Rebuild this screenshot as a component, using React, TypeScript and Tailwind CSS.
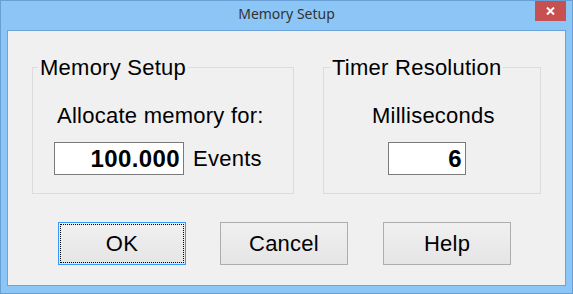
import React from 'react';

function CloseIcon() {
  return (
    <svg width="9" height="8" viewBox="0 0 9 8" className="block">
      <path d="M1 0.5 L8 7.5 M8 0.5 L1 7.5" stroke="#ffffff" strokeWidth="2" fill="none" />
    </svg>
  );
}

interface GroupProps {
  title: string;
  legendOffset: string;
  width: string;
  children: React.ReactNode;
}

function GroupBox({ title, legendOffset, width, children }: GroupProps) {
  return (
    <fieldset className={`${width} h-[139px] border border-[#dcdcdc] min-w-0`}>
      <legend className={`${legendOffset} px-[2px] text-[22px] leading-[25px] tracking-[0.25px] text-black`}>{title}</legend>
      {children}
    </fieldset>
  );
}

function NumberBox({ value, width }: { value: string; width: string }) {
  return (
    <div className={`${width} h-[33px] border border-[#7a7a7a] bg-white pr-[3px] text-right text-[24px] font-bold leading-[31px] tracking-[0.4px] text-black`}>
      {value}
    </div>
  );
}

function DialogButton({ label, focused }: { label: string; focused?: boolean }) {
  return (
    <button
      className={`flex w-[128px] h-[43px] p-[1px] border bg-linear-to-b from-[#f0f0f0] to-[#e5e5e5] text-[22px] tracking-[0.25px] text-black ${
        focused ? 'border-[#3399ff]' : 'border-[#adadad]'
      }`}
    >
      <span
        className={`flex flex-1 items-center justify-center border ${
          focused ? 'border-dotted border-black' : 'border-transparent'
        }`}
      >
        {label}
      </span>
    </button>
  );
}

export default function App() {
  return (
    <div className="w-[573px] h-[294px] flex flex-col border border-[#6a9fd6] bg-[#8bc6f7] font-['Liberation_Sans',Arial,sans-serif]">
      {/* title bar */}
      <div className="h-[29px] grid grid-cols-[1fr_auto_1fr] shrink-0">
        <div />
        <div className="pt-[3px] font-['Noto_Sans',sans-serif] text-[14px] leading-[20px] text-[#333333]">
          Memory Setup
        </div>
        <div className="flex justify-end items-start">
          <div className="mr-[6px] w-[31px] h-[20px] bg-[#c75050] flex items-center justify-center">
            <CloseIcon />
          </div>
        </div>
      </div>

      {/* client area */}
      <div className="mx-[6px] h-[256px] shrink-0 border border-[#6ea3d9] bg-[#f0f0f0] flex flex-col">
        <div className="mt-[24px] flex px-[24px] gap-[29px]">
          <GroupBox title="Memory Setup" legendOffset="ml-[5px]" width="w-[262px]">
            <div className="flex flex-col items-start">
              <div className="mt-[23px] ml-[24px] text-[22px] leading-[25px] tracking-[0.25px] text-black">Allocate memory for:</div>
              <div className="mt-[14px] ml-[21px] flex items-center">
                <NumberBox value="100.000" width="w-[130px]" />
                <span className="ml-[9px] text-[22px] leading-[25px] tracking-[0.25px] text-black">Events</span>
              </div>
            </div>
          </GroupBox>
          <GroupBox title="Timer Resolution" legendOffset="ml-[6px]" width="w-[218px]">
            <div className="flex flex-col items-start">
              <div className="mt-[23px] ml-[48px] text-[22px] leading-[25px] tracking-[0.25px] text-black">Milliseconds</div>
              <div className="mt-[14px] ml-[64px]">
                <NumberBox value="6" width="w-[78px]" />
              </div>
            </div>
          </GroupBox>
        </div>

        <div className="mt-[28px] pl-[50px] flex gap-[34px]">
          <DialogButton label="OK" focused />
          <DialogButton label="Cancel" />
          <div className="ml-[1px]">
            <DialogButton label="Help" />
          </div>
        </div>
      </div>
    </div>
  );
}
